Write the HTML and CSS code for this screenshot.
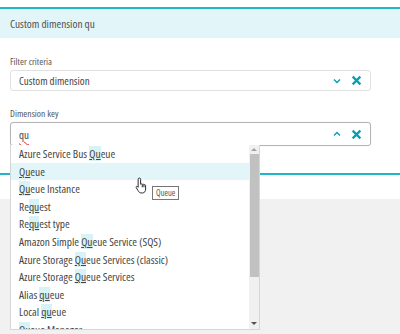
FILE: index.html
```html
<!DOCTYPE html>
<html lang="en">
<head>
    <meta charset="UTF-8">
    <meta name="viewport" content="width=device-width, initial-scale=1.0">
    <title>Custom dimension</title>
    <link rel="stylesheet" href="styles.css">
</head>
<body>
    <div class="page">
        <div class="top-line"></div>
        <div class="header">Custom dimension qu</div>

        <div class="form">
            <div class="field-label">Filter criteria</div>
            <div class="field">
                <span class="field-value">Custom dimension</span>
                <span class="field-icons">
                    <svg class="icon" viewBox="0 0 10 10"><path d="M2 3.5 L5 6.5 L8 3.5" /></svg>
                    <svg class="icon icon-x" viewBox="0 0 10 10"><path d="M1.5 1.5 L8.5 8.5 M8.5 1.5 L1.5 8.5" /></svg>
                </span>
            </div>

            <div class="field-label">Dimension key</div>
            <div class="field field-open">
                <span class="field-value"><span class="typed">qu</span></span>
                <span class="field-icons">
                    <svg class="icon" viewBox="0 0 10 10"><path d="M2 6.5 L5 3.5 L8 6.5" /></svg>
                    <svg class="icon icon-x" viewBox="0 0 10 10"><path d="M1.5 1.5 L8.5 8.5 M8.5 1.5 L1.5 8.5" /></svg>
                </span>

                <div class="dropdown">
                    <ul class="options">
                        <li>Azure Service Bus <mark>Qu</mark>eue</li>
                        <li class="hover"><mark>Qu</mark>eue</li>
                        <li><mark>Qu</mark>eue Instance</li>
                        <li>Re<mark>qu</mark>est</li>
                        <li>Re<mark>qu</mark>est type</li>
                        <li>Amazon Simple <mark>Qu</mark>eue Service (SQS)</li>
                        <li>Azure Storage <mark>Qu</mark>eue Services (classic)</li>
                        <li>Azure Storage <mark>Qu</mark>eue Services</li>
                        <li>Alias <mark>qu</mark>eue</li>
                        <li>Local <mark>qu</mark>eue</li>
                        <li><mark>Qu</mark>eue Manager</li>
                    </ul>
                    <div class="scrollbar">
                        <span class="arrow arrow-up"></span>
                        <span class="thumb"></span>
                        <span class="arrow arrow-down"></span>
                    </div>
                    <div class="tooltip">Queue</div>
                    <svg class="cursor" viewBox="0 0 16 20">
                        <path d="M5 1.5 C5.9 1.5 6.4 2 6.4 3 L6.4 8.5 C6.8 8 8 8 8.3 8.8 C8.8 8.2 10 8.3 10.2 9.2 C10.7 8.8 12 8.9 12.1 10 L12.1 14 C12.1 16.5 11 18.5 8.5 18.5 L7 18.5 C5.3 18.5 4.6 17.6 3.6 16 L1.5 12.6 C1 11.8 1.4 11.1 2.1 11 C2.7 10.9 3.2 11.4 3.6 12 L3.6 3 C3.6 2 4.1 1.5 5 1.5 Z" />
                        <path class="cursor-line" d="M8.3 9 L8.3 12 M10.2 9.4 L10.2 12" />
                    </svg>
                </div>
            </div>
        </div>

        <div class="tab-area">
            <div class="tab-line"></div>
        </div>
        <div class="gray-area"></div>
    </div>
</body>
</html>
```

FILE: styles.css
```css
* {
    margin: 0;
    padding: 0;
    box-sizing: border-box;
}
body {
    font-family: "Open Sans", Lato, sans-serif;
    font-stretch: 84%;
    color: #454646;
    background-color: white;
    width: 400px;
    height: 334px;
    overflow: hidden;
}
.page {
    display: flex;
    flex-direction: column;
    height: 100%;
}
.top-line {
    margin-top: 7px;
    height: 2px;
    background-color: #1fb7c8;
}
.header {
    height: 29px;
    background-color: #e2f6f9;
    padding-left: 10px;
    font-size: 11.3px;
    line-height: 29px;
    color: #505050;
}
.form {
    padding: 18px 29px 0 10px;
    position: relative;
    z-index: 2;
}
.field-label {
    font-size: 9.6px;
    color: #555;
    height: 11px;
    line-height: 11px;
    margin-bottom: 3px;
}
.field {
    height: 21px;
    border: 1px solid #e1e1e1;
    border-radius: 3px;
    display: flex;
    align-items: center;
    padding: 0 8px;
    margin-bottom: 17px;
    position: relative;
    font-size: 11px;
}
.field-open {
    height: 24px;
    border-color: #b4b4b4;
    box-shadow: 0 0 1px rgba(0, 0, 0, 0.15);
    margin-bottom: 0;
}
.field-value {
    flex: 1;
}
.typed {
    text-decoration: underline wavy #e0303a;
    text-decoration-thickness: 1px;
    text-underline-offset: 2px;
}
.field-icons {
    display: flex;
    align-items: center;
    gap: 9px;
}
.icon {
    width: 10px;
    height: 10px;
    fill: none;
    stroke: #00a1b2;
    stroke-width: 1.4;
}
.icon-x {
    width: 11px;
    height: 11px;
    stroke-width: 2;
}
.dropdown {
    position: absolute;
    top: 100%;
    left: -1px;
    width: 250px;
    height: 185px;
    background-color: white;
    border: 1px solid #d6d6d6;
    border-top: none;
    display: flex;
    overflow: hidden;
}
.options {
    list-style: none;
    flex: 1;
}
.options li {
    height: 17.6px;
    line-height: 17.6px;
    padding-left: 8px;
    font-size: 11.4px;
    color: #454646;
    white-space: nowrap;
}
.options li.hover {
    background-color: #e2f6f9;
}
mark {
    background-color: #d8f3f7;
    color: inherit;
    text-decoration: underline;
    text-underline-offset: 1px;
}
.options li.hover mark {
    background-color: transparent;
}
.scrollbar {
    width: 10px;
    background-color: #f0f0f0;
    display: flex;
    flex-direction: column;
    align-items: center;
}
.arrow {
    width: 0;
    height: 0;
    border-left: 3px solid transparent;
    border-right: 3px solid transparent;
}
.arrow-up {
    border-bottom: 3px solid #a3a3a3;
    margin: 3px 0;
}
.arrow-down {
    border-top: 3px solid #505050;
    margin-top: auto;
    margin-bottom: 4px;
}
.thumb {
    width: 9px;
    height: 123px;
    background-color: #c1c1c1;
}
.tooltip {
    position: absolute;
    left: 141px;
    top: 41px;
    height: 14px;
    line-height: 12px;
    padding: 0 3px;
    font-size: 8.5px;
    color: #555;
    background-color: white;
    border: 1px solid #777;
}
.cursor {
    position: absolute;
    left: 124px;
    top: 31px;
    width: 14px;
    height: 19px;
    fill: white;
    stroke: #222;
    stroke-width: 1.1;
}
.cursor-line {
    fill: none;
}
.tab-area {
    height: 53px;
    padding-top: 27px;
}
.tab-line {
    height: 2px;
    background-color: #1fb7c8;
}
.gray-area {
    flex: 1;
    background-color: #f1f1f1;
}
```
